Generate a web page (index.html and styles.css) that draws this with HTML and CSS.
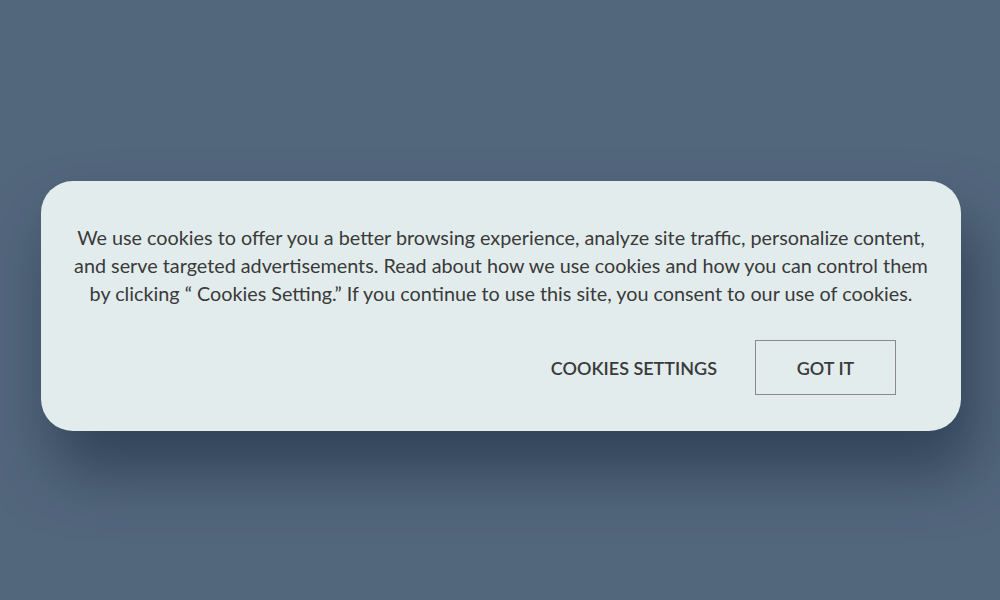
FILE: index.html
```html
<!DOCTYPE html>
<html>
<head>
<meta charset="utf-8">
<link rel="stylesheet" href="styles.css">
</head>
<body>
<div class="page">
  <div class="card">
    <p class="msg">We use cookies to offer you a better browsing experience, analyze site traffic, personalize content, and serve targeted advertisements. Read about how we use cookies and how you can control them by clicking “ Cookies Setting.” If you continue to use this site, you consent to our use of cookies.</p>
    <div class="actions">
      <button class="btn btn-link">COOKIES SETTINGS</button>
      <button class="btn btn-outline">GOT IT</button>
    </div>
  </div>
</div>
</body>
</html>
```
FILE: styles.css
```css
html, body {
  margin: 0;
  padding: 0;
  height: 100%;
}
body {
  background: #52667c;
  font-family: "Lato", "Liberation Sans", sans-serif;
  overflow: hidden;
}
.page {
  padding: 181px 39px 0 41px;
}
.card {
  width: 920px;
  height: 250px;
  box-sizing: border-box;
  background: #e2ecec;
  border-radius: 32px;
  padding: 42px 29px 0 29px;
  box-shadow: 12px 40px 60px rgba(38, 56, 78, 0.75);
}
.msg {
  margin: 0;
  text-align: center;
  font-size: 19.8px;
  line-height: 28px;
  color: #3a3a3a;
}
.actions {
  display: flex;
  justify-content: flex-end;
  align-items: center;
  gap: 38px;
  margin-top: 33px;
  padding-right: 36px;
}
.btn {
  font-family: "Lato", "Liberation Sans", sans-serif;
  font-size: 18px;
  font-weight: 600;
  color: #3a3a3a;
  background: transparent;
  cursor: pointer;
}
.btn-link {
  border: none;
  padding: 0;
}
.btn-outline {
  width: 141px;
  height: 55px;
  border: 1px solid #8a8a8a;
  padding: 0;
}
```
